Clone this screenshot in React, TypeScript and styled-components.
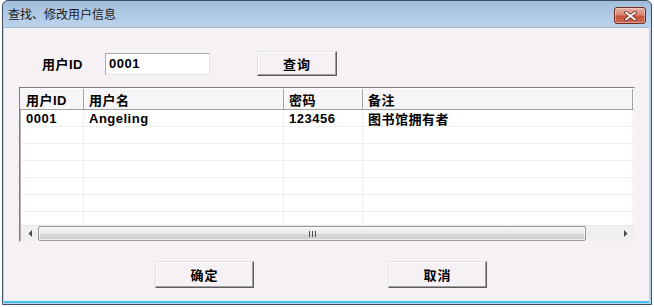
import React from 'react';
import styled, { createGlobalStyle } from 'styled-components';

const GlobalStyle = createGlobalStyle`
  html, body {
    margin: 0;
    padding: 0;
    background: #ffffff;
  }
  body {
    font-family: "Liberation Sans", "Noto Sans CJK SC", sans-serif;
  }
`;

const Window = styled.div`
  margin-left: 2px;
  width: 650px;
  height: 305px;
  box-sizing: border-box;
  display: flex;
  flex-direction: column;
  border: 1px solid #3d4c5e;
  border-radius: 6px 6px 0 0;
  padding: 0 2px 3px 1px;
  background: linear-gradient(#a2bddb 0px, #bcd4ee 26px, #b6d4ee 100%);
`;

const TitleBar = styled.div`
  height: 26px;
  display: flex;
  justify-content: space-between;
  align-items: flex-start;
  padding: 0 3px 0 4px;
`;

const Title = styled.span`
  margin-top: 5px;
  font-family: "Noto Sans CJK SC", sans-serif;
  font-size: 12px;
  line-height: 16px;
  color: #1b1b1b;
`;

const CloseButton = styled.div`
  margin-top: 6px;
  width: 30px;
  height: 15px;
  display: flex;
  align-items: center;
  justify-content: center;
  border: 1px solid #6e2c22;
  border-radius: 3px;
  background: linear-gradient(#eab0a2 0%, #dc8672 45%, #c9553f 55%, #c8664e 100%);
  box-shadow: inset 0 0 0 1px rgba(255, 255, 255, 0.35);
`;

const Client = styled.div`
  flex: 1;
  display: flex;
  flex-direction: column;
  padding: 0 0 0 15px;
  background: #f5f1f5;
  border-top: 1px solid #9cb6d2;
  box-shadow: 0 2px 0 #45bde8;
`;

const SearchRow = styled.div`
  margin-top: 23px;
  margin-left: 23px;
  height: 25px;
  display: flex;
  align-items: center;
`;

const Label = styled.span`
  width: 63px;
  font-family: "Liberation Sans", "Noto Sans CJK SC", sans-serif;
  font-weight: bold;
  font-size: 13px;
  letter-spacing: 0.5px;
  color: #000;
`;

const TextBox = styled.div`
  width: 105px;
  height: 22px;
  box-sizing: border-box;
  margin-right: 47px;
  padding: 0 3px;
  display: flex;
  align-items: center;
  background: #ffffff;
  border: 1px solid;
  border-color: #a8a8a8 #e6e6e6 #e6e6e6 #a8a8a8;
  font-weight: bold;
  font-size: 13px;
  letter-spacing: 0.5px;
  color: #000;
`;

const PushButton = styled.div<{ $w: number; $h: number }>`
  width: ${(p) => p.$w}px;
  height: ${(p) => p.$h}px;
  box-sizing: border-box;
  display: flex;
  align-items: center;
  justify-content: center;
  background: #f5f1f5;
  border: 1px solid;
  border-color: #e2e2e2 #5c5c5c #5c5c5c #e2e2e2;
  box-shadow: inset -1px -1px 0 #a0a0a0, inset 1px 1px 0 #ffffff;
  font-family: "Noto Sans CJK SC", sans-serif;
  font-weight: bold;
  font-size: 13px;
  letter-spacing: 1px;
  color: #000;
`;

const ListView = styled.div`
  margin-top: 11px;
  width: 616px;
  height: 155px;
  box-sizing: border-box;
  display: flex;
  flex-direction: column;
  border: 1px solid;
  border-color: #7c7c7c #f2f2f2 #f2f2f2 #7c7c7c;
  box-shadow: inset 1px 1px 0 #b4b4b4;
  background: #ffffff;
  overflow: hidden;
`;

const cols = [63, 200, 79, 270];

const Header = styled.div`
  height: 22px;
  flex: none;
  display: flex;
  padding-left: 1px;
  background: #f7f5f7;
  border-top: 1px solid #ffffff;
  border-bottom: 1px solid #a0a0a0;
  box-sizing: border-box;
`;

const HeaderCell = styled.div<{ $w: number }>`
  width: ${(p) => p.$w}px;
  flex: none;
  box-sizing: border-box;
  padding-left: 5px;
  display: flex;
  align-items: center;
  border-right: 1px solid #a0a0a0;
  box-shadow: 1px 0 0 #ffffff;
  font-weight: bold;
  font-size: 13px;
  letter-spacing: 0.5px;
  color: #000;
`;

const Body = styled.div`
  flex: 1;
  overflow: hidden;
  padding-left: 1px;
`;

const Row = styled.div`
  height: 17px;
  display: flex;
  box-sizing: border-box;
  border-bottom: 1px solid #efefef;
`;

const Cell = styled.div<{ $w: number }>`
  width: ${(p) => p.$w}px;
  flex: none;
  box-sizing: border-box;
  padding: 1px 0 0 5px;
  display: flex;
  align-items: center;
  border-right: 1px solid #efefef;
  font-weight: bold;
  font-size: 13px;
  letter-spacing: 0.5px;
  color: #000;
  white-space: nowrap;
`;

const ScrollBar = styled.div`
  height: 16px;
  flex: none;
  display: flex;
  margin-left: 1px;
  background: #f0f0f0;
  border-top: 1px solid #e6e6e6;
  box-sizing: border-box;
`;

const ArrowCell = styled.div`
  width: 17px;
  flex: none;
  display: flex;
  align-items: center;
  justify-content: center;
`;

const Track = styled.div`
  flex: 1;
  display: flex;
  align-items: stretch;
`;

const Thumb = styled.div`
  width: 548px;
  box-sizing: border-box;
  display: flex;
  align-items: center;
  justify-content: center;
  border: 1px solid #979797;
  border-radius: 2px;
  background: linear-gradient(#f4f4f4 0%, #e9e9e9 50%, #d9d9d9 51%, #cfcfcf 100%);
  box-shadow: inset 0 0 0 1px rgba(255, 255, 255, 0.6);
`;

const ButtonRow = styled.div`
  margin-top: 19px;
  padding-left: 136px;
  display: flex;
  gap: 134px;
`;

const headers = ['用户ID', '用户名', '密码', '备注'];
const rows = [
  ['0001', 'Angeling', '123456', '图书馆拥有者'],
  ['', '', '', ''],
  ['', '', '', ''],
  ['', '', '', ''],
  ['', '', '', ''],
  ['', '', '', ''],
  ['', '', '', ''],
];

const Grip = () => (
  <svg width="7" height="6" viewBox="0 0 7 6">
    {[0, 3, 6].map((x) => (
      <rect key={x} x={x} y={0} width={1} height={6} fill="#4a4a4a" />
    ))}
  </svg>
);

const Arrow = ({ dir }: { dir: 'left' | 'right' }) => (
  <svg width="4" height="7" viewBox="0 0 4 7">
    {dir === 'left' ? (
      <polygon points="4,0 4,7 0.5,3.5" fill="#4a4a4a" />
    ) : (
      <polygon points="0,0 0,7 3.5,3.5" fill="#4a4a4a" />
    )}
  </svg>
);

const CloseGlyph = () => (
  <svg width="13" height="10" viewBox="0 0 13 10">
    <path d="M2 1.5 L11 8.5 M11 1.5 L2 8.5" stroke="#5a2018" strokeWidth="3.4" strokeLinecap="square" />
    <path d="M2 1.5 L11 8.5 M11 1.5 L2 8.5" stroke="#ffffff" strokeWidth="1.8" strokeLinecap="square" />
  </svg>
);

const App = () => {
  return (
    <>
      <GlobalStyle />
      <Window>
        <TitleBar>
          <Title>查找、修改用户信息</Title>
          <CloseButton>
            <CloseGlyph />
          </CloseButton>
        </TitleBar>
        <Client>
          <SearchRow>
            <Label>用户ID</Label>
            <TextBox>0001</TextBox>
            <PushButton $w={80} $h={25}>查询</PushButton>
          </SearchRow>
          <ListView>
            <Header>
              {headers.map((h, i) => (
                <HeaderCell key={h} $w={cols[i]}>{h}</HeaderCell>
              ))}
            </Header>
            <Body>
              {rows.map((r, ri) => (
                <Row key={ri}>
                  {r.map((c, ci) => (
                    <Cell key={ci} $w={cols[ci]}>{c}</Cell>
                  ))}
                </Row>
              ))}
            </Body>
            <ScrollBar>
              <ArrowCell>
                <Arrow dir="left" />
              </ArrowCell>
              <Track>
                <Thumb>
                  <Grip />
                </Thumb>
              </Track>
              <ArrowCell>
                <Arrow dir="right" />
              </ArrowCell>
            </ScrollBar>
          </ListView>
          <ButtonRow>
            <PushButton $w={99} $h={27}>确定</PushButton>
            <PushButton $w={99} $h={27}>取消</PushButton>
          </ButtonRow>
        </Client>
      </Window>
    </>
  );
};

export default App;
